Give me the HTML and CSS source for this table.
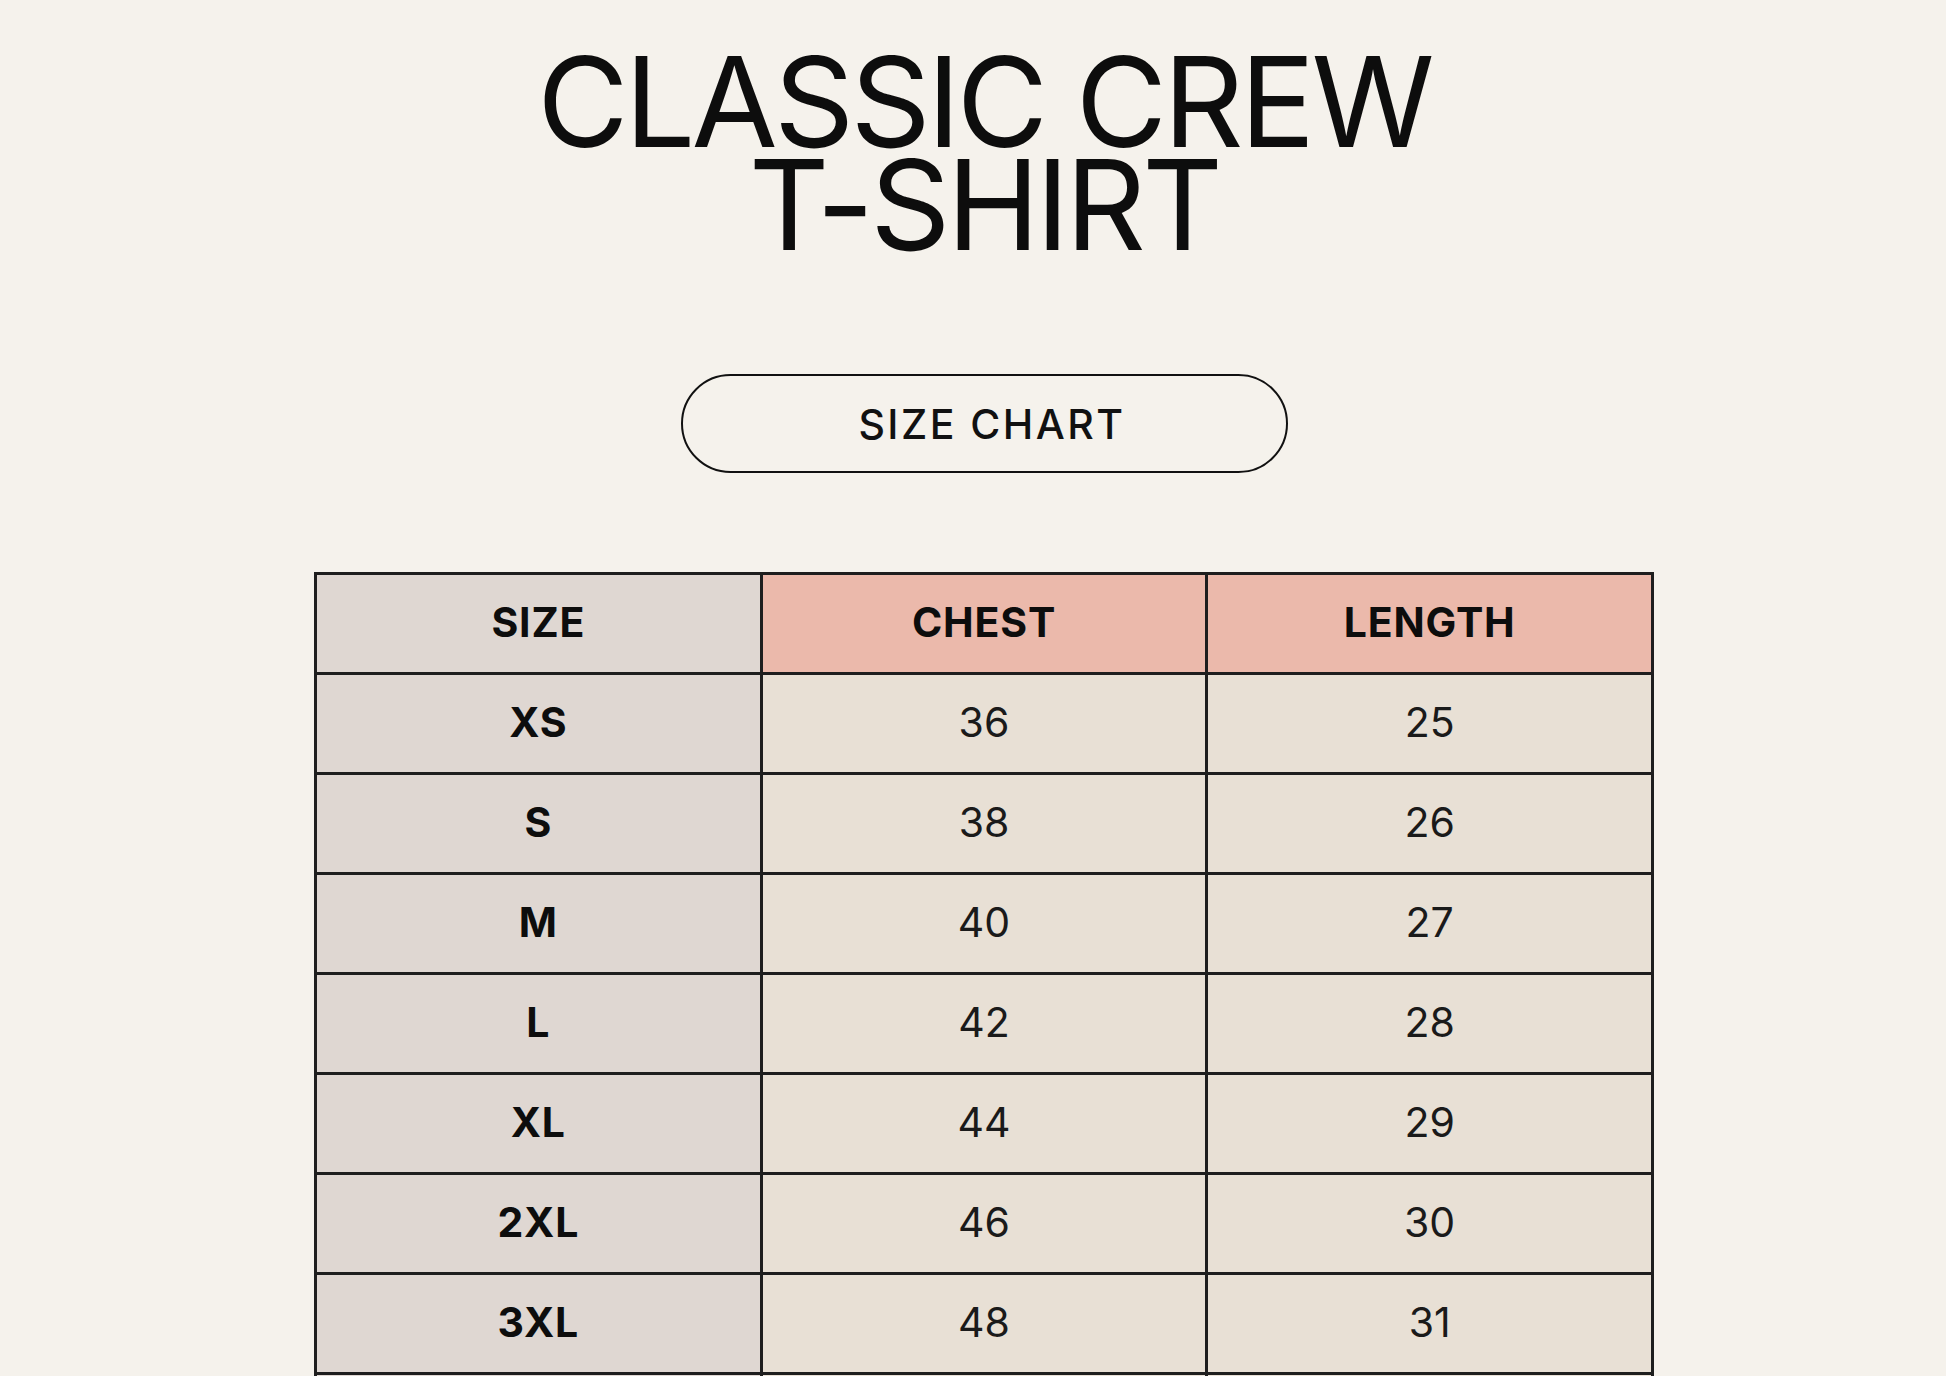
FILE: index.html
```html
<!DOCTYPE html>
<html lang="en">
<head>
<meta charset="utf-8">
<title>Classic Crew T-Shirt — Size Chart</title>
<link rel="stylesheet" href="styles.css">
</head>
<body>
<main class="page">
  <h1 class="title">CLASSIC CREW<br>T-SHIRT</h1>
  <button class="pill" type="button">SIZE CHART</button>
  <table class="chart">
    <thead>
      <tr><th class="c-size">SIZE</th><th class="c-head">CHEST</th><th class="c-head">LENGTH</th></tr>
    </thead>
    <tbody>
      <tr><th class="c-size">XS</th><td>36</td><td>25</td></tr>
      <tr><th class="c-size">S</th><td>38</td><td>26</td></tr>
      <tr><th class="c-size">M</th><td>40</td><td>27</td></tr>
      <tr><th class="c-size">L</th><td>42</td><td>28</td></tr>
      <tr><th class="c-size">XL</th><td>44</td><td>29</td></tr>
      <tr><th class="c-size">2XL</th><td>46</td><td>30</td></tr>
      <tr><th class="c-size">3XL</th><td>48</td><td>31</td></tr>
      <tr><th class="c-size">4XL</th><td>50</td><td>32</td></tr>
    </tbody>
  </table>
</main>
</body>
</html>
```
FILE: styles.css
```css
html, body {
  margin: 0;
  padding: 0;
  background: #f5f2ec;
}
body {
  font-family: Inter, "Liberation Sans", sans-serif;
  color: #0d0d0d;
  overflow: hidden;
  height: 1376px;
}
.page {
  display: flex;
  flex-direction: column;
  align-items: center;
  padding: 50px 0 0 22px;
}
.title {
  margin: 0;
  font-size: 125px;
  font-weight: 400;
  line-height: 103px;
  letter-spacing: -0.03em;
  text-align: center;
}
.pill {
  margin-top: 118px;
  width: 607px;
  height: 99px;
  border: 2px solid #111;
  border-radius: 50px;
  background: transparent;
  font-family: Inter, "Liberation Sans", sans-serif;
  font-size: 41px;
  font-weight: 500;
  letter-spacing: 0.06em;
  color: #111;
  padding: 0 0 0 16px;
}
.chart {
  margin-top: 99px;
  border-collapse: collapse;
  width: 1340px;
  table-layout: fixed;
}
.chart th, .chart td {
  border: 3px solid #1e1e1e;
  height: 95px;
  padding: 0 0 2px;
  text-align: center;
  font-size: 41px;
  line-height: 1;
}
.chart th {
  font-weight: 700;
  letter-spacing: 0.02em;
}
.chart td {
  font-weight: 400;
  background: #e8e0d5;
  color: #1a1a1a;
}
.c-size {
  background: #dfd7d2;
}
.c-head {
  background: #ebb9ab;
}
```
